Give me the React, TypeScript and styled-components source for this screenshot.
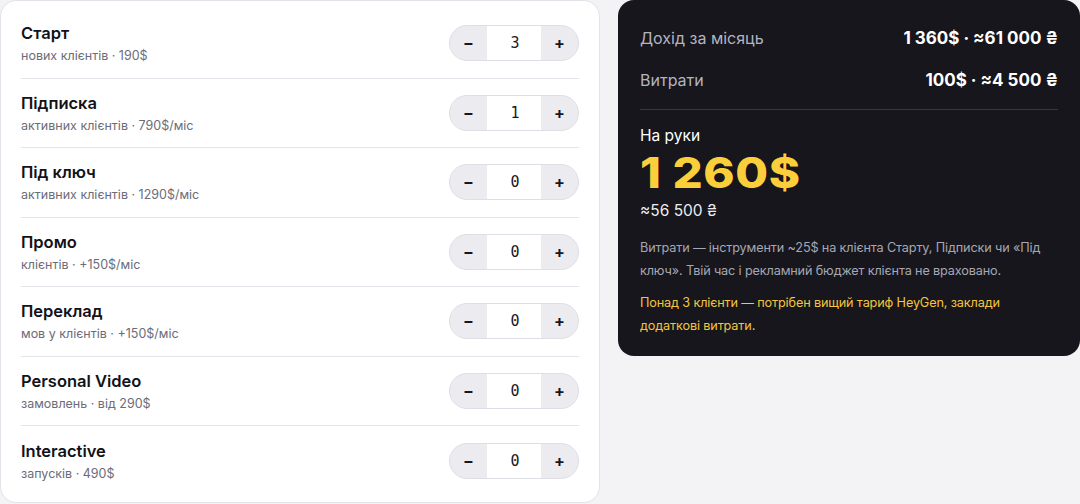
import React from "react";
import styled, { createGlobalStyle } from "styled-components";

const Global = createGlobalStyle`
  html, body { margin: 0; padding: 0; background: #f3f3f6; }
  body { font-family: Inter, "Noto Sans", sans-serif; color: #15151b; }
  * { box-sizing: border-box; }
`;

const Page = styled.div`
  display: grid;
  grid-template-columns: 600px 462px;
  column-gap: 18px;
  align-items: start;
  width: 1080px;
`;

const ListCard = styled.div`
  background: #ffffff;
  border: 1px solid #e2e2e8;
  border-radius: 16px;
  padding: 8px 20px 7px;
  height: 503px;
`;

const Row = styled.div`
  display: flex;
  align-items: center;
  justify-content: space-between;
  height: 69.5px;
  border-bottom: 1px solid #e4e4ea;
  &:last-child { border-bottom: none; }
`;

const Info = styled.div`
  display: flex;
  flex-direction: column;
  gap: 3px;
`;

const Title = styled.div`
  font-size: 16.5px;
  font-weight: 600;
  line-height: 22px;
  color: #121217;
`;

const Sub = styled.div`
  font-size: 12.5px;
  line-height: 17px;
  color: #6c6c78;
`;

const Stepper = styled.div`
  display: grid;
  grid-template-columns: 37px 54px 37px;
  height: 36px;
  border: 1px solid #dedee6;
  border-radius: 18px;
  overflow: hidden;
  background: #ebebf0;
`;

const StepButton = styled.button`
  border: none;
  background: transparent;
  padding: 0;
  font-family: Inter, sans-serif;
  font-size: 16px;
  font-weight: 700;
  color: #17171d;
  display: flex;
  align-items: center;
  justify-content: center;
`;

const Count = styled.div`
  background: #ffffff;
  display: flex;
  align-items: center;
  justify-content: center;
  font-family: "DejaVu Sans Mono", monospace;
  font-size: 15px;
  font-weight: 500;
  color: #17171d;
  padding-left: 2px;
`;

const SummaryCard = styled.div`
  background: #16161c;
  border-radius: 16px;
  padding: 17px 22px 22px;
  color: #ffffff;
  height: 356px;
`;

const StatRow = styled.div`
  display: flex;
  justify-content: space-between;
  align-items: center;
  height: 42px;
`;

const StatLabel = styled.div`
  font-size: 16px;
  color: #b4b4c0;
`;

const StatValue = styled.div`
  font-size: 17px;
  font-weight: 700;
  color: #ffffff;
`;

const Divider = styled.div`
  height: 1px;
  background: #383841;
  margin: 8px 0 15px;
`;

const NetLabel = styled.div`
  font-size: 15.5px;
  line-height: 22px;
  color: #ffffff;
`;

const NetValue = styled.div`
  display: inline-block;
  font-size: 42px;
  font-weight: 800;
  line-height: 50px;
  color: #fbcf3b;
  transform: scaleX(1.13);
  transform-origin: left center;
  margin-top: 1px;
  letter-spacing: 0.5px;
`;

const NetUah = styled.div`
  font-size: 15.5px;
  line-height: 22px;
  color: #ececf0;
  margin-top: 2px;
`;

const Note = styled.p<{ $warn?: boolean }>`
  margin: ${(p) => (p.$warn ? "10px 0 0" : "15px 0 0")};
  font-size: 12.7px;
  letter-spacing: -0.15px;
  line-height: 22.5px;
  color: ${(p) => (p.$warn ? "#f4c53d" : "#a7a7b3")};
`;

const items = [
  { title: "Старт", sub: "нових клієнтів · 190$", n: 3 },
  { title: "Підписка", sub: "активних клієнтів · 790$/міс", n: 1 },
  { title: "Під ключ", sub: "активних клієнтів · 1290$/міс", n: 0 },
  { title: "Промо", sub: "клієнтів · +150$/міс", n: 0 },
  { title: "Переклад", sub: "мов у клієнтів · +150$/міс", n: 0 },
  { title: "Personal Video", sub: "замовлень · від 290$", n: 0 },
  { title: "Interactive", sub: "запусків · 490$", n: 0 },
];

export default function App() {
  return (
    <>
      <Global />
      <Page>
        <ListCard>
          {items.map((it) => (
            <Row key={it.title}>
              <Info>
                <Title>{it.title}</Title>
                <Sub>{it.sub}</Sub>
              </Info>
              <Stepper>
                <StepButton>−</StepButton>
                <Count>{it.n}</Count>
                <StepButton>+</StepButton>
              </Stepper>
            </Row>
          ))}
        </ListCard>
        <SummaryCard>
          <StatRow>
            <StatLabel>Дохід за місяць</StatLabel>
            <StatValue>1 360$ · ≈61 000 ₴</StatValue>
          </StatRow>
          <StatRow>
            <StatLabel>Витрати</StatLabel>
            <StatValue>100$ · ≈4 500 ₴</StatValue>
          </StatRow>
          <Divider />
          <NetLabel>На руки</NetLabel>
          <NetValue>1 260$</NetValue>
          <NetUah>≈56 500 ₴</NetUah>
          <Note>
            Витрати — інструменти ~25$ на клієнта Старту, Підписки чи «Під
            ключ». Твій час і рекламний бюджет клієнта не враховано.
          </Note>
          <Note $warn>
            Понад 3 клієнти — потрібен вищий тариф HeyGen, заклади додаткові
            витрати.
          </Note>
        </SummaryCard>
      </Page>
    </>
  );
}
